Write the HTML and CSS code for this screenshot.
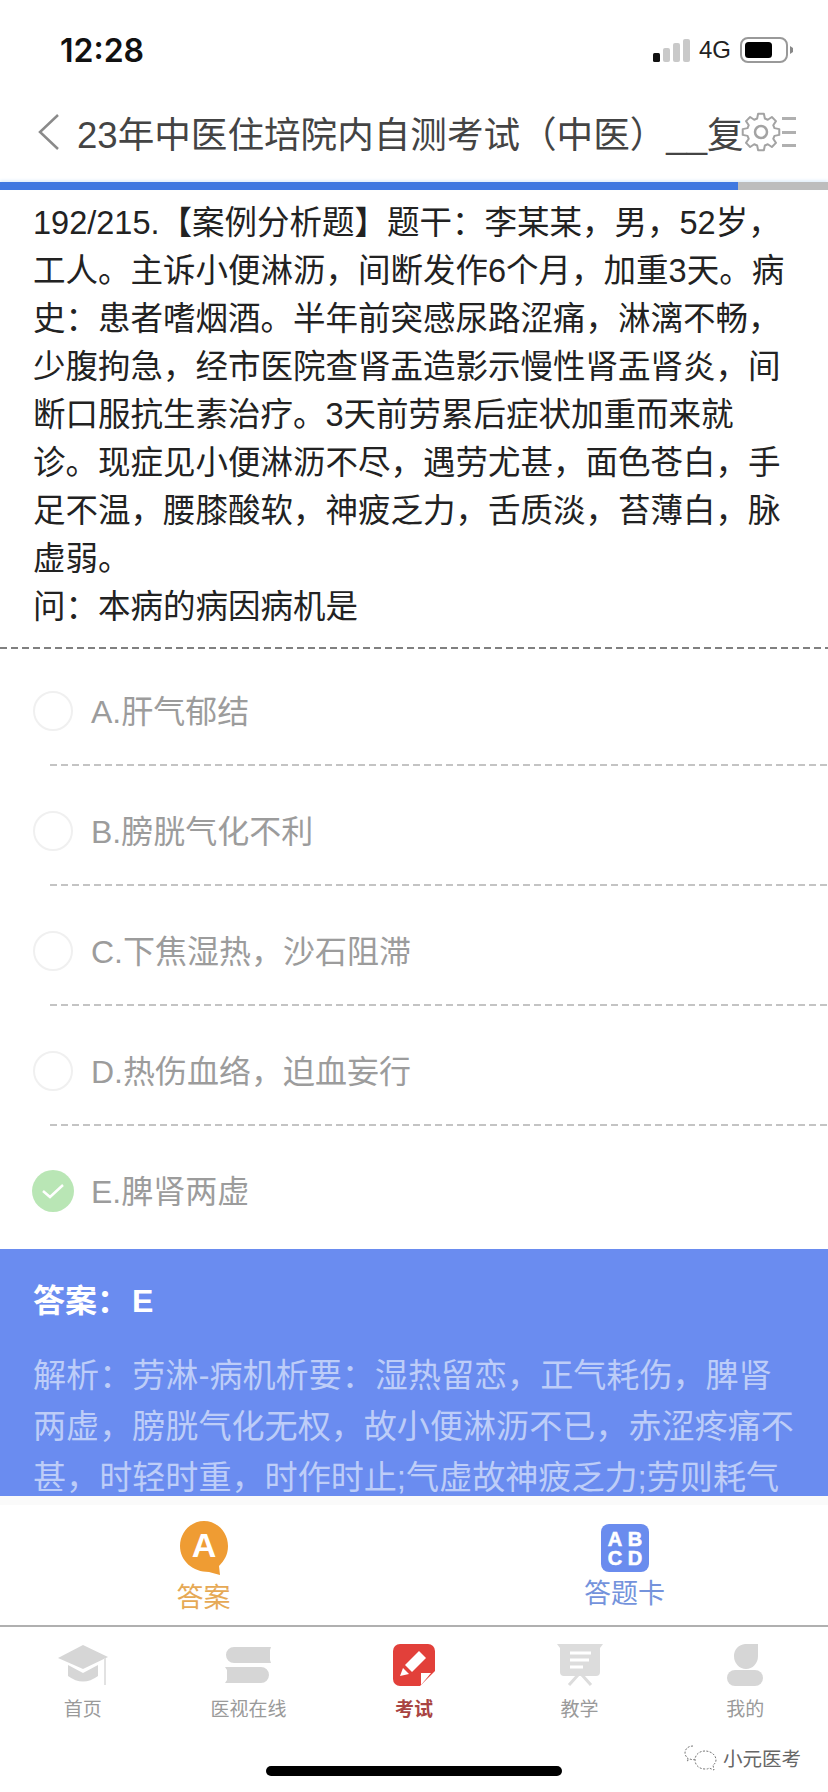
FILE: index.html
```html
<!DOCTYPE html>
<html lang="zh-CN">
<head>
    <meta charset="UTF-8">
    <meta name="viewport" content="width=device-width, initial-scale=1.0">
    <title>考试</title>
    <link rel="stylesheet" href="styles.css">
</head>
<body>
<div class="phone">

    <!-- Status bar -->
    <div class="status-bar">
        <span class="time">12:28</span>
        <div class="status-right">
            <svg class="signal" width="37" height="23" viewBox="0 0 37 23">
                <rect x="0" y="14" width="7" height="9" rx="1.5" fill="#111"/>
                <rect x="10" y="9" width="7" height="14" rx="2" fill="#c9c9c9"/>
                <rect x="20" y="4" width="7" height="19" rx="2" fill="#c9c9c9"/>
                <rect x="30" y="0" width="7" height="23" rx="2" fill="#c9c9c9"/>
            </svg>
            <span class="network">4G</span>
            <svg class="battery" width="54" height="26" viewBox="0 0 54 26">
                <rect x="1" y="1" width="46" height="24" rx="7" fill="none" stroke="#999" stroke-width="2"/>
                <rect x="5" y="5" width="27" height="16" rx="3.5" fill="#000"/>
                <path d="M50 9l3 2v4l-3 2z" fill="#888"/>
            </svg>
        </div>
    </div>

    <!-- Nav -->
    <div class="nav">
        <svg class="back" width="22" height="36" viewBox="0 0 22 36">
            <path d="M20 1L2 18l18 17" fill="none" stroke="#8a8a8a" stroke-width="2.5"/>
        </svg>
        <div class="nav-title"><span>23年中医住培院内自测考试（中医）__复</span></div>
        <svg class="gear" width="40" height="40" viewBox="-20 -20 40 40">
            <path d="M18.27 2.89L13.46 3.86 12.24 6.79 14.97 10.87 10.87 14.97 6.79 12.24 3.86 13.46 2.89 18.27-2.89 18.27-3.86 13.46-6.79 12.24-10.87 14.97-14.97 10.87-12.24 6.79-13.46 3.86-18.27 2.89-18.27-2.89-13.46-3.86-12.24-6.79-14.97-10.87-10.87-14.97-6.79-12.24-3.86-13.46-2.89-18.27 2.89-18.27 3.86-13.46 6.79-12.24 10.87-14.97 14.97-10.87 12.24-6.79 13.46-3.86 18.27-2.89Z" fill="none" stroke="#a3a3a3" stroke-width="2" stroke-linejoin="round"/>
            <circle r="6" fill="none" stroke="#a3a3a3" stroke-width="2.5"/>
        </svg>
        <div class="nav-lines">
            <span></span>
            <span></span>
            <span></span>
        </div>
    </div>

    <!-- Progress -->
    <div class="progress"><div class="progress-fill"></div></div>

    <!-- Question -->
    <div class="question">
        192/215.【案例分析题】题干：李某某，男，52岁，工人。主诉小便淋沥，间断发作6个月，加重3天。病史：患者嗜烟酒。半年前突感尿路涩痛，淋漓不畅，少腹拘急，经市医院查肾盂造影示慢性肾盂肾炎，间断口服抗生素治疗。3天前劳累后症状加重而来就诊。现症见小便淋沥不尽，遇劳尤甚，面色苍白，手足不温，腰膝酸软，神疲乏力，舌质淡，苔薄白，脉虚弱。<br>问：本病的病因病机是
    </div>

    <!-- Options -->
    <div class="options">
        <div class="option"><span class="radio"></span>A.肝气郁结</div>
        <div class="option"><span class="radio"></span>B.膀胱气化不利</div>
        <div class="option"><span class="radio"></span>C.下焦湿热，沙石阻滞</div>
        <div class="option"><span class="radio"></span>D.热伤血络，迫血妄行</div>
        <div class="option">
            <span class="radio radio-checked">
                <svg width="24" height="18" viewBox="0 0 24 18">
                    <path d="M2 9l7 6L22 3" fill="none" stroke="#fff" stroke-width="2.5"/>
                </svg>
            </span>E.脾肾两虚
        </div>
    </div>

    <!-- Answer panel -->
    <div class="answer-panel">
        <div class="answer-key">答案：<b>E</b></div>
        <div class="answer-text">解析：劳淋-病机析要：湿热留恋，正气耗伤，脾肾两虚，膀胱气化无权，故小便淋沥不已，赤涩疼痛不甚，时轻时重，时作时止;气虚故神疲乏力;劳则耗气</div>
    </div>

    <!-- Answer / card buttons -->
    <div class="action-bar">
        <div class="action action-answer">
            <svg width="50" height="56" viewBox="0 0 50 56">
                <path d="M25 1C38 1 49 12 49 26c0 9-4 15-9 20l1 9-11-3C14 52 1 41 1 26 1 12 12 1 25 1Z" fill="#ef9c33"/>
                <text x="25" y="37" class="icon-letter-big">A</text>
            </svg>
            <span>答案</span>
        </div>
        <div class="action action-card">
            <svg width="48" height="48" viewBox="0 0 48 48">
                <rect width="48" height="48" rx="8" fill="#6a8cee"/>
                <text x="14" y="22" class="icon-letter">A</text>
                <text x="34" y="22" class="icon-letter">B</text>
                <text x="14" y="41" class="icon-letter">C</text>
                <text x="34" y="41" class="icon-letter">D</text>
            </svg>
            <span>答题卡</span>
        </div>
    </div>

    <!-- Tab bar -->
    <div class="tabs">
        <div class="tab">
            <div class="tab-icon">
                <svg width="50" height="40" viewBox="0 0 50 40">
                    <path d="M0 13L25 0l25 12-25 12z" fill="#d6d6d6"/>
                    <path d="M10 20l15 8 15-8v11q-15 11-30 0z" fill="#d6d6d6"/>
                    <path d="M47 13v27" stroke="#e2e2e2" stroke-width="2"/>
                </svg>
            </div>
            <span>首页</span>
        </div>
        <div class="tab">
            <div class="tab-icon">
                <svg width="46" height="36" viewBox="0 0 46 36">
                    <path d="M9 0h37l-1 3v10l1 3H9a8 8 0 0 1 0-16z" fill="#d6d6d6"/>
                    <path d="M0 20h36a8 8 0 0 1 0 16H0l2-3V23z" fill="#d6d6d6"/>
                </svg>
            </div>
            <span>医视在线</span>
        </div>
        <div class="tab tab-active">
            <div class="tab-icon">
                <svg width="44" height="44" viewBox="0 0 44 44">
                    <path d="M8 1h28a7 7 0 0 1 7 7v20L28 43H8a7 7 0 0 1-7-7V8a7 7 0 0 1 7-7z" fill="#e2403a"/>
                    <path d="M27 8l7 7-14 14-7-7z" fill="#fff"/>
                    <path d="M11 25l6 6-9 2z" fill="#fff"/>
                    <path d="M29 30h10L29 42z" fill="#fff"/>
                </svg>
            </div>
            <span>考试</span>
        </div>
        <div class="tab">
            <div class="tab-icon">
                <svg width="46" height="42" viewBox="0 0 46 42">
                    <path d="M0 0h46l-3 4v24a4 4 0 0 1-4 4H7a4 4 0 0 1-4-4V4z" fill="#dcdcdc"/>
                    <path d="M13 9h21M13 16h19M13 23h13" stroke="#fff" stroke-width="3"/>
                    <path d="M21 31L12 41M25 31l9 10" stroke="#dcdcdc" stroke-width="3"/>
                </svg>
            </div>
            <span>教学</span>
        </div>
        <div class="tab">
            <div class="tab-icon">
                <svg width="36" height="42" viewBox="0 0 36 42">
                    <path d="M18 0h13v12a12 13 0 0 1-24 0A12 12 0 0 1 18 0z" fill="#d6d6d6"/>
                    <rect x="0" y="26" width="36" height="16" rx="8" fill="#d6d6d6"/>
                </svg>
            </div>
            <span>我的</span>
        </div>
    </div>

    <div class="home-bar"></div>

    <!-- Watermark -->
    <div class="watermark">
        <svg width="34" height="26" viewBox="0 0 34 26">
            <path d="M9 1C4 1 1 4 1 8c0 2 1 4 3 5l-1 3 3-2c2 1 4 1 5 0" fill="none" stroke="#777" stroke-width="1" stroke-dasharray="2 1.5"/>
            <path d="M21 6c-6 0-10 4-10 9s4 9 10 9c2 0 3 0 4-1l5 2-1-5c2-1 3-3 3-5 0-5-5-9-11-9z" fill="none" stroke="#777" stroke-width="1" stroke-dasharray="2 1.5"/>
        </svg>
        <span>小元医考</span>
    </div>
</div>
</body>
</html>
```

FILE: styles.css
```css
* {
    box-sizing: border-box;
}

body {
    margin: 0;
    background-color: #fff;
    font-family: "Liberation Sans", "Noto Sans CJK SC", sans-serif;
}

.phone {
    position: relative;
    width: 828px;
    height: 1792px;
    display: flex;
    flex-direction: column;
    overflow: hidden;
    background-color: #fff;
}

/* Status bar */
.status-bar {
    height: 90px;
    padding: 10px 34px 0 60px;
    display: flex;
    justify-content: space-between;
    align-items: center;
}

.time {
    font-family: Inter, sans-serif;
    font-size: 32px;
    font-weight: 600;
    color: #111;
}

.status-right {
    display: flex;
    align-items: center;
}

.signal {
    margin-right: 9px;
}

.network {
    font-size: 24px;
    color: #222;
    margin-right: 9px;
}

/* Nav */
.nav {
    height: 92px;
    padding: 0 32px 8px 38px;
    display: flex;
    align-items: center;
}

.nav-title {
    flex: 1;
    min-width: 0;
    margin-left: 17px;
    white-space: nowrap;
    font-size: 36.6px;
    color: #444;
}

.gear {
    flex: none;
}

.nav-lines {
    width: 14px;
    height: 30px;
    margin-left: 1px;
    display: flex;
    flex-direction: column;
    justify-content: space-between;
}

.nav-lines span {
    height: 3px;
    background-color: #b0b0b0;
}

/* Progress */
.progress {
    height: 8px;
    background-color: #bdbdbd;
    box-shadow: 0 -2px 3px #e4f0fb;
}

.progress-fill {
    width: 738px;
    height: 100%;
    background-color: #3f78e0;
}

/* Question */
.question {
    padding: 9px 33px 18px;
    font-size: 32.5px;
    line-height: 48px;
    color: #222;
    border-bottom: 2px solid transparent;
    background: repeating-linear-gradient(to right, #808080 0 7px, transparent 7px 11px) left bottom / 100% 2px no-repeat;
    height: 461px;
}

/* Options */
.option {
    height: 120px;
    margin-left: 50px;
    padding-top: 6px;
    display: flex;
    align-items: center;
    font-size: 32px;
    color: #9c9c9c;
    background: repeating-linear-gradient(to right, #c4c4c4 0 7px, transparent 7px 11px) left bottom / 100% 2px no-repeat;
}

.option:first-child {
    height: 115px;
    padding-top: 1px;
}

.option:last-child {
    height: 123px;
    padding-bottom: 3px;
    background: none;
}

.radio {
    flex: none;
    width: 40px;
    height: 40px;
    margin: 4px 18px 0 -17px;
    border: 2px solid #f0f0f0;
    border-radius: 50%;
    display: flex;
    align-items: center;
    justify-content: center;
}

.radio-checked {
    width: 42px;
    height: 42px;
    margin: 4px 17px 0 -18px;
    border: none;
    background-color: #b9e6b5;
}

/* Answer panel */
.answer-panel {
    flex: none;
    height: 247px;
    padding: 30px 33px 0;
    overflow: hidden;
    background-color: #6a8cf0;
}

.answer-key {
    font-size: 32px;
    line-height: 44px;
    font-weight: bold;
    color: #fff;
}

.answer-key b {
    margin-left: 3px;
    font-size: 32px;
}

.answer-text {
    margin-top: 27px;
    font-size: 33.1px;
    line-height: 51px;
    color: #bdcdf8;
}

/* Answer / card buttons */
.action-bar {
    flex: none;
    height: 131px;
    padding-top: 9px;
    display: flex;
    border-top: 9px solid #fafafa;
    border-bottom: 2px solid #b0b0b0;
}

.action {
    flex: 1;
    display: flex;
    flex-direction: column;
    align-items: center;
    font-size: 27px;
    line-height: 34px;
}

.action-answer {
    padding-top: 6px;
    padding-right: 8px;
    color: #e6a955;
}

.action-answer span {
    margin-top: 5px;
}

.action-card {
    padding-top: 10px;
    padding-left: 6px;
    color: #7493dc;
}

.action-card span {
    margin-top: 5px;
}

.icon-letter {
    font-family: "Liberation Sans", sans-serif;
    font-size: 20px;
    font-weight: bold;
    fill: #fff;
    stroke: #fff;
    stroke-width: 0.6px;
    text-anchor: middle;
}

.icon-letter-big {
    font-family: "Liberation Sans", sans-serif;
    font-size: 34px;
    font-weight: bold;
    fill: #fff;
    text-anchor: middle;
}

/* Tab bar */
.tabs {
    flex: none;
    padding-top: 16px;
    display: flex;
}

.tab {
    flex: 1;
    display: flex;
    flex-direction: column;
    align-items: center;
    font-size: 19px;
    line-height: 24px;
    color: #9a9a9a;
}

.tab-icon {
    height: 44px;
    margin-bottom: 11px;
    display: flex;
    align-items: center;
}

.tab-active {
    color: #a94442;
    font-weight: bold;
}

.home-bar {
    width: 296px;
    height: 10px;
    margin: auto auto 16px;
    border-radius: 5px;
    background-color: #000;
}

/* Watermark over the corner */
.watermark {
    position: absolute;
    left: 684px;
    top: 1743px;
    display: flex;
    align-items: center;
    gap: 5px;
    font-size: 19.5px;
    color: #666;
    text-shadow: 0 0 2px #fff;
}
```
